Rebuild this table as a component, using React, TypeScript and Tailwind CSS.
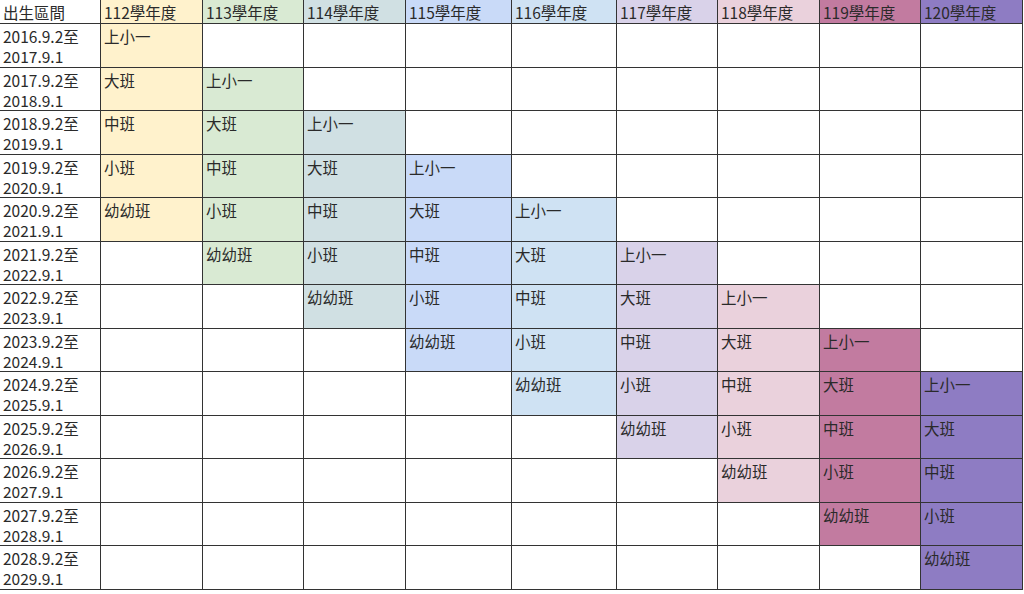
import React from 'react';

const years = ['112', '113', '114', '115', '116', '117', '118', '119', '120'];

// header / stripe colour per school year column
const columnColors = [
  'bg-[#fff2cc]',
  'bg-[#d9ead3]',
  'bg-[#d0e0e3]',
  'bg-[#c9daf8]',
  'bg-[#cfe2f3]',
  'bg-[#d9d2e9]',
  'bg-[#ead1dc]',
  'bg-[#c27ba0]',
  'bg-[#8e7cc3]',
];

const stages = ['上小一', '大班', '中班', '小班', '幼幼班'];

const birthRanges = Array.from({ length: 13 }, (_, i) => ({
  from: `${2016 + i}.9.2至`,
  to: `${2017 + i}.9.1`,
}));

const cellText = 'pl-[3px] pt-[2px] text-[15.5px] leading-[20px] text-[#2a2a2a] whitespace-nowrap overflow-hidden';

const App: React.FC = () => {
  return (
    <div
      className="h-[594px] w-[1024px] bg-white"
      style={{ fontFamily: '"Noto Sans CJK TC", "Noto Sans", sans-serif' }}
    >
      <div className="inline-block bg-[#333333] pr-px pb-px">
        <div className="grid grid-cols-[100px_101px_100px_101px_105px_104px_100px_101px_100px_101px] grid-rows-[23px_repeat(13,42.54px)] gap-px">
          <div className={`bg-white ${cellText}`}>出生區間</div>
          {years.map((year, j) => (
            <div key={year} className={`${columnColors[j]} ${cellText}`}>
              {year}學年度
            </div>
          ))}

          {birthRanges.map((range, i) => (
            <React.Fragment key={range.from}>
              <div className={`bg-white ${cellText}`}>
                <div>{range.from}</div>
                <div>{range.to}</div>
              </div>
              {years.map((year, j) => {
                const stage = i - j;
                const active = stage >= 0 && stage < stages.length;
                return (
                  <div key={year} className={`${active ? columnColors[j] : 'bg-white'} ${cellText}`}>
                    {active ? stages[stage] : ''}
                  </div>
                );
              })}
            </React.Fragment>
          ))}
        </div>
      </div>
    </div>
  );
};

export default App;
